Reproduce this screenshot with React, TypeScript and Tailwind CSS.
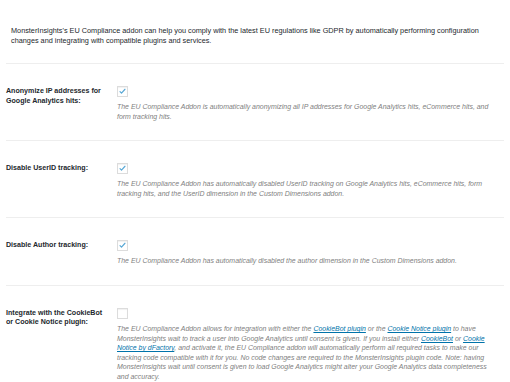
import React from 'react';

type Row = {
  label: React.ReactNode;
  checked: boolean;
  desc: React.ReactNode;
};

function Checkbox({ checked }: { checked: boolean }) {
  return (
    <div className="w-[11px] h-[11px] border border-[#dcdcdc] bg-white shadow-[inset_0_1px_1px_rgba(0,0,0,0.06)] flex items-center justify-center">
      {checked && (
        <svg viewBox="0 0 20 20" className="w-[11px] h-[11px]">
          <path d="M4.5 10.2l3.3 3.6 7.7-8.8" fill="none" stroke="#5aa9d6" strokeWidth="2.6" strokeLinecap="round" strokeLinejoin="round" />
        </svg>
      )}
    </div>
  );
}

const A = ({ children }: { children: React.ReactNode }) => (
  <a className="text-[#0073aa] underline">{children}</a>
);

const ROWS: Row[] = [
  {
    label: <>Anonymize IP addresses for Google Analytics hits:</>,
    checked: true,
    desc: <>The EU Compliance Addon is automatically anonymizing all IP addresses for Google Analytics hits, eCommerce hits, and form tracking hits.</>,
  },
  {
    label: <>Disable UserID tracking:</>,
    checked: true,
    desc: <>The EU Compliance Addon has automatically disabled UserID tracking on Google Analytics hits, eCommerce hits, form tracking hits, and the UserID dimension in the Custom Dimensions addon.</>,
  },
  {
    label: <>Disable Author tracking:</>,
    checked: true,
    desc: <>The EU Compliance Addon has automatically disabled the author dimension in the Custom Dimensions addon.</>,
  },
  {
    label: <>Integrate with the CookieBot or Cookie Notice plugin:</>,
    checked: false,
    desc: (
      <>
        The EU Compliance Addon allows for integration with either the <A>CookieBot plugin</A> or the <A>Cookie Notice plugin</A> to have MonsterInsights wait to track a user into Google Analytics until consent is given. If you install either <A>CookieBot</A> or <A>Cookie Notice by dFactory</A>, and activate it, the EU Compliance addon will automatically perform all required tasks to make our tracking code compatible with it for you. No code changes are required to the MonsterInsights plugin code. Note: having MonsterInsights wait until consent is given to load Google Analytics might alter your Google Analytics data completeness and accuracy.
      </>
    ),
  },
];

export default function App() {
  return (
    <div className="w-[510px] h-[382px] overflow-hidden bg-white text-[#23282d] font-['Liberation_Sans',Arial,sans-serif]">
      {/* intro */}
      <p className="pt-[26px] pl-[11px] pr-[20px] text-[7.3px] leading-[10px]">
        MonsterInsights's EU Compliance addon can help you comply with the latest EU regulations like GDPR by automatically performing configuration changes and integrating with compatible plugins and services.
      </p>

      <div className="mx-[6px] mt-[17px]">
        {ROWS.map((row, i) => (
          <div key={i} className="border-t border-[#eeeeee] pt-[22px] pb-[19px] flex">
            <div className="w-[111px] shrink-0 pt-[1px] pr-[8px] text-[7.1px] leading-[9.5px] font-bold">
              {row.label}
            </div>
            <div className="w-[372px]">
              <Checkbox checked={row.checked} />
              <p className="mt-[5px] text-[6.95px] leading-[9.6px] italic text-[#808080]">{row.desc}</p>
            </div>
          </div>
        ))}
      </div>
    </div>
  );
}
